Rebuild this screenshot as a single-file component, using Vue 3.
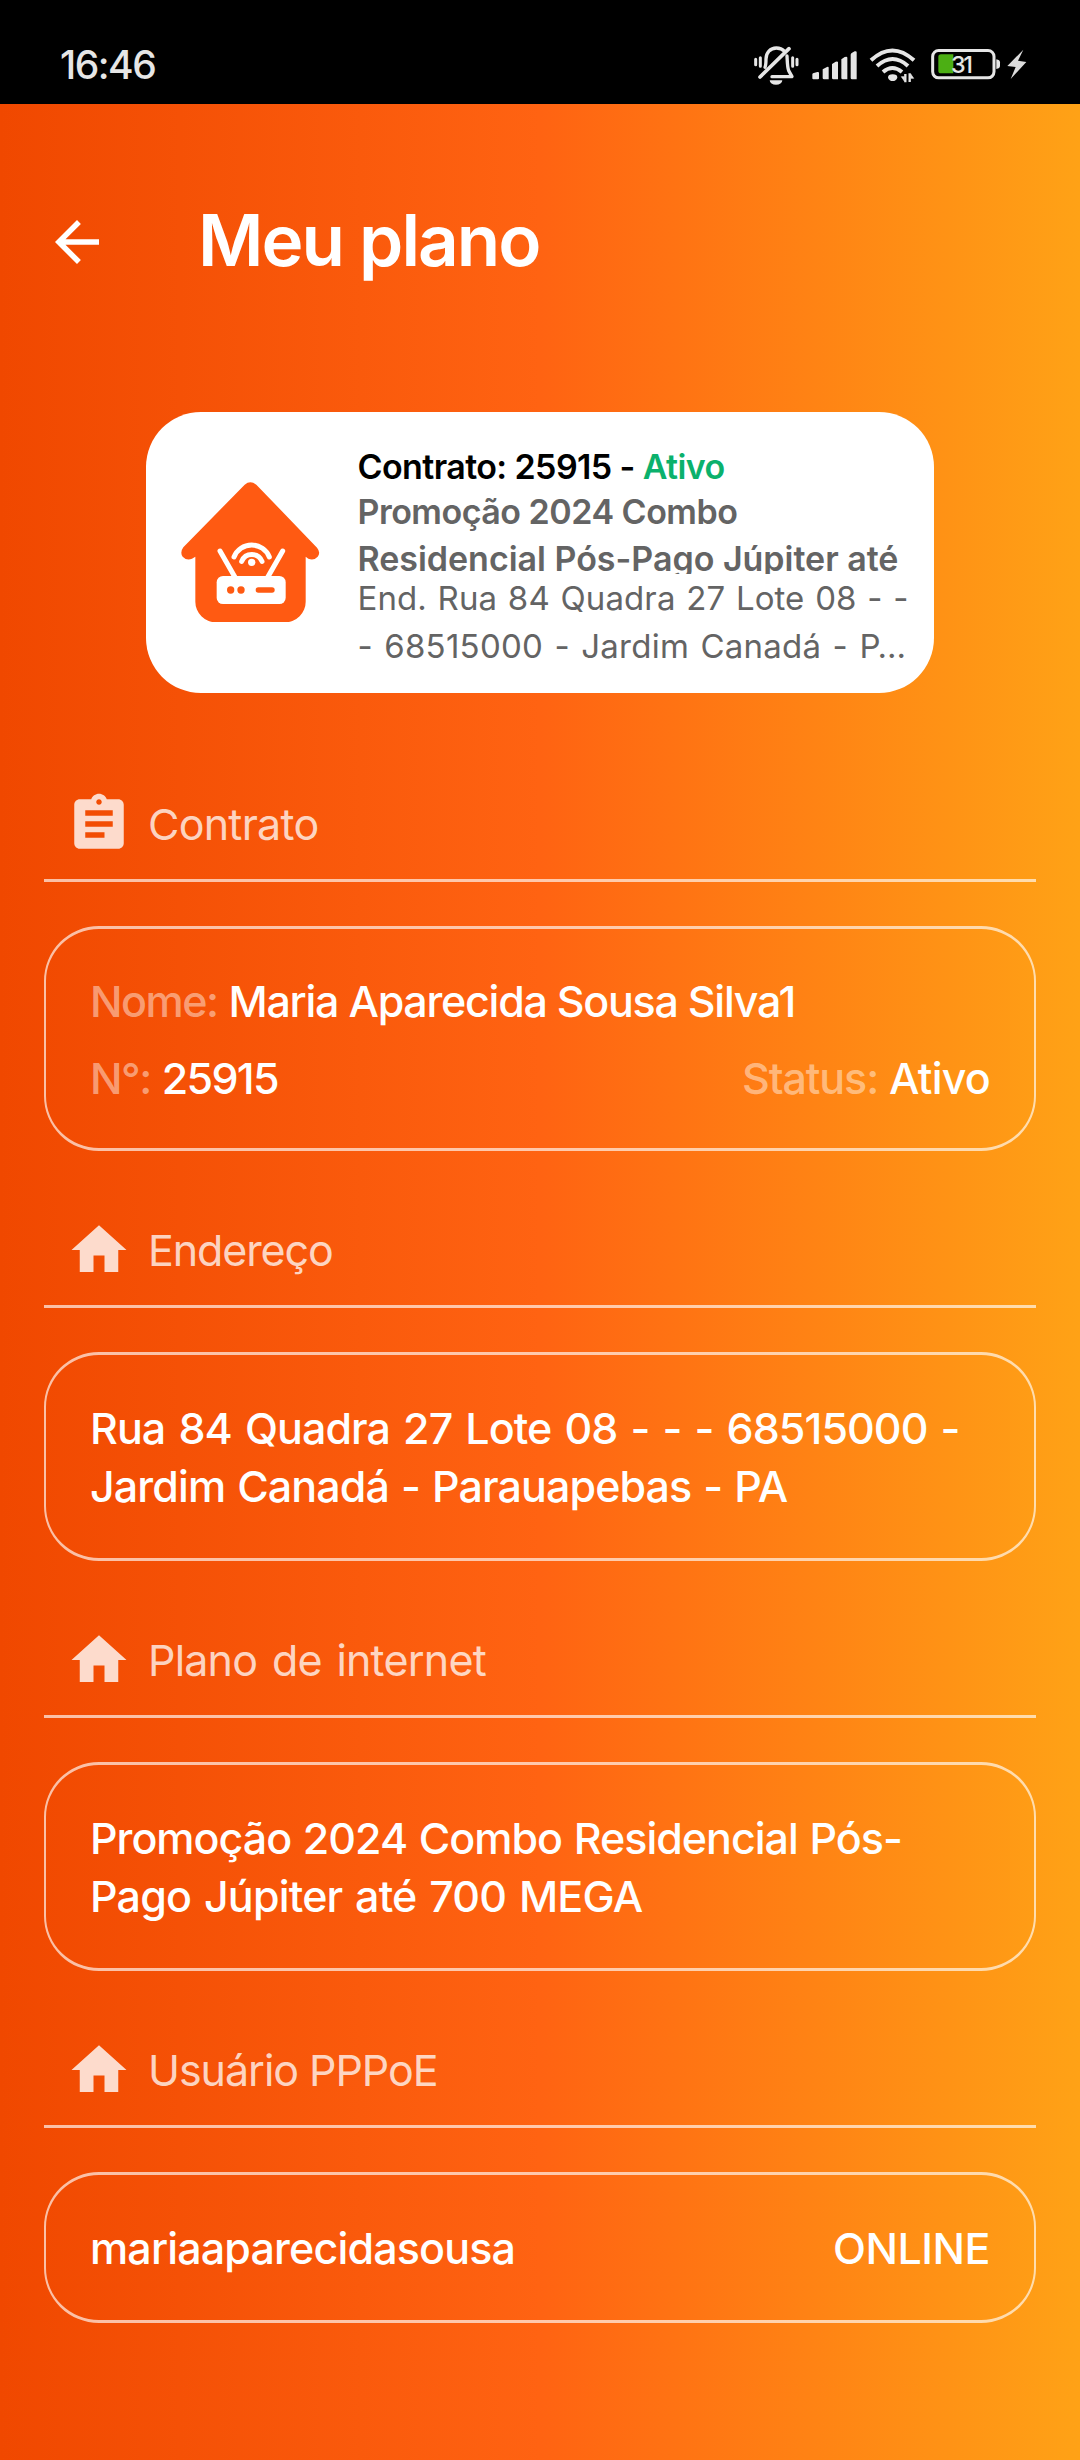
<script setup>
const icons = {
  assignment:
    'M19 3h-4.18C14.4 1.84 13.3 1 12 1c-1.3 0-2.4.84-2.82 2H5c-1.1 0-2 .9-2 2v14c0 1.1.9 2 2 2h14c1.1 0 2-.9 2-2V5c0-1.1-.9-2-2-2zm-7 0c.55 0 1 .45 1 1s-.45 1-1 1-1-.45-1-1 .45-1 1-1zm2 14H7v-2h7v2zm3-4H7v-2h10v2zm0-4H7V7h10v2z',
  home: 'M10 20v-6h4v6h5v-8h3L12 3 2 12h3v8z',
}
</script>

<template>
  <div class="screen">
    <div class="status-bar">
      <span class="clock">16:46</span>
      <div class="status-icons">
        <!-- silent / vibrate bell -->
        <svg class="bell" viewBox="74 74 135 120" width="45" height="40" fill="none" stroke="#e6e6e6" stroke-linecap="round">
          <path d="M107 141c3-7 3-14 3-25 0-19 13-33 31-33 11 0 19 4 25 10" stroke-width="10" />
          <path d="M173 107c1 17 1 34 5 44l10 18H128" stroke-width="10" stroke-linejoin="round" />
          <path d="M92 170L179 85" stroke-width="11" />
          <path d="M79 117v16M93 112v26M190 112v26M203 117v16" stroke-width="9" />
          <path d="M121 180h38a19 13 0 0 1-38 0z" fill="#e6e6e6" stroke="none" />
        </svg>
        <svg class="signal" viewBox="248 74 134 120" width="44.7" height="40" fill="#e6e6e6">
          <path d="M249 162q0-2 2-3l13-4q5-1 5 3v16q0 3-3 3h-14q-3 0-3-3zM280 147l13-7q5-2 5 2v35h-14q-4 0-4-4zM308 131l11-7q7-2 7 2v51h-14q-4 0-4-4zM336 117l10-7q8-3 8 2v65h-14q-4 0-4-4zM364 103q0-3 3-5l9-5q6-2 6 3v81h-14q-4 0-4-4z" />
        </svg>
        <svg class="wifi" viewBox="418 74 141 120" width="47" height="40" fill="none" stroke="#e6e6e6" stroke-width="12">
          <path d="M424 120q64-59 129 0" />
          <path d="M442 137q47-42 93 0" />
          <path d="M460 155q28-24 57 0" />
          <path d="M475 172q0-10 14-10t14 10q-4 10-14 10t-14-10z" fill="#e6e6e6" stroke="none" />
          <path d="M527 186v-25M540 159v26" stroke-width="7" />
          <path d="M515 169l9 13v-13zM552 174l-9-13v13z" fill="#e6e6e6" stroke="#e6e6e6" stroke-width="2" />
        </svg>
        <svg class="battery" viewBox="602 74 210 120" width="70" height="40">
          <rect x="607" y="90.500" width="184" height="82" rx="18" fill="none" stroke="#e6e6e6" stroke-width="9" />
          <path d="M632 102h37v57h-37q-8 0-8-8v-41q0-8 8-8z" fill="#4caf14" />
          <path d="M798 117q11 2 11 9v11q0 7-11 9z" fill="#e6e6e6" />
          <text x="662" y="158" textLength="66" font-size="70" font-weight="500" fill="#e6e6e6">31</text>
        </svg>
        <svg class="bolt" viewBox="830 74 60 120" width="20" height="40" fill="#dcdcdc">
          <path d="M879 88l-48 49 25 3-15 36 47-51-25-4z" />
        </svg>
      </div>
    </div>

    <header class="app-bar">
      <svg class="back" viewBox="0 0 24 24" width="66" height="66" fill="#fff">
        <path d="M20 11H7.830l5.590-5.590L12 4l-8 8 8 8 1.410-1.410L7.830 13H20v-2z" />
      </svg>
      <h1>Meu plano</h1>
    </header>

    <section class="summary">
      <svg class="summary-icon" viewBox="153 244 416 422" width="138.700" height="140.700">
        <path fill="#ff5a12" d="M344 252Q361 238 379 252L561 441Q573 456 563 468Q551 481 535 474L527 468V603A62 62 0 0 1 465 665H258A62 62 0 0 1 196 603V468L186 474Q170 481 158 468Q149 455 160 440Z" />
        <rect x="260" y="526" width="207" height="84" rx="19" fill="#fff" />
        <g fill="none" stroke="#fff" stroke-width="15" stroke-linecap="round">
          <path d="M270 451L315 530M458 451L413 530" />
          <path d="M312 469A57 57 0 0 1 418 469" />
          <path d="M335 482A33 33 0 0 1 396 482" />
        </g>
        <circle cx="365" cy="485" r="11" fill="#fff" />
        <circle cx="302" cy="568" r="11" fill="#ff5a12" />
        <circle cx="333" cy="568" r="11" fill="#ff5a12" />
        <rect x="377" y="560" width="57" height="16" rx="8" fill="#ff5a12" />
      </svg>
      <div class="summary-text">
        <p class="summary-title"><span class="s-contract">Contrato: 25915 - </span><span class="s-status">Ativo</span></p>
        <p class="summary-plan">
          <span class="s-plan1">Promoção 2024 Combo</span>
          <span class="s-plan2">Residencial Pós-Pago Júpiter até</span>
        </p>
        <p class="summary-address">
          <span class="s-addr1">End. Rua 84 Quadra 27 Lote 08 - -</span>
          <span class="s-addr2">- 68515000 - Jardim Canadá - P…</span>
        </p>
      </div>
    </section>

    <main class="sections">
      <section>
        <h2><svg viewBox="0 0 24 24"><path :d="icons.assignment" /></svg><span class="h-contract">Contrato</span></h2>
        <div class="card contract">
          <div class="row">
            <div><span class="key k-name">Nome:</span><span class="v-name">Maria Aparecida Sousa Silva1</span></div>
          </div>
          <div class="row">
            <div><span class="key k-number">N°:</span><span class="v-number">25915</span></div>
            <div><span class="key k-status">Status:</span><span class="v-status">Ativo</span></div>
          </div>
        </div>
      </section>

      <section>
        <h2><svg viewBox="0 0 24 24"><path :d="icons.home" /></svg><span class="h-address">Endereço</span></h2>
        <div class="card">
          <p class="a-line1">Rua 84 Quadra 27 Lote 08 - - - 68515000 -</p>
          <p class="a-line2">Jardim Canadá - Parauapebas - PA</p>
        </div>
      </section>

      <section>
        <h2><svg viewBox="0 0 24 24"><path :d="icons.home" /></svg><span class="h-plan">Plano de internet</span></h2>
        <div class="card">
          <p class="p-line1">Promoção 2024 Combo Residencial Pós-</p>
          <p class="p-line2">Pago Júpiter até 700 MEGA</p>
        </div>
      </section>

      <section>
        <h2><svg viewBox="0 0 24 24"><path :d="icons.home" /></svg><span class="h-user">Usuário PPPoE</span></h2>
        <div class="card">
          <div class="row">
            <span class="v-user">mariaaparecidasousa</span>
            <span class="v-online">ONLINE</span>
          </div>
        </div>
      </section>
    </main>
  </div>
</template>

<style>
body {
  margin: 0;
}
</style>

<style scoped>
.screen {
  width: 1080px;
  height: 2460px;
  overflow: hidden;
  box-sizing: border-box;
  color: #fff;
  font-family: Inter, "Noto Sans", sans-serif;
  background: linear-gradient(90deg, #f04800 0%, #ff6312 50%, #ffa216 100%);
}

h1,
h2,
p {
  margin: 0;
}

svg {
  display: block;
  flex: none;
}

.status-bar {
  display: flex;
  align-items: center;
  justify-content: space-between;
  box-sizing: border-box;
  height: 104px;
  padding: 25px 53px 0 60px;
  background: #000;
}

.clock {
  color: #e6e6e6;
  font-size: 39px;
  font-weight: 500;
  letter-spacing: -1.5px;
}

.status-icons {
  display: flex;
}

.signal {
  margin-left: 13px;
}

.wifi {
  margin-left: 12px;
}

.battery {
  margin-left: 15px;
}

.bolt {
  margin-left: 6px;
}

.app-bar {
  display: flex;
  align-items: center;
  height: 276px;
  padding-left: 44px;
}

.app-bar h1 {
  margin: 0 0 4px 88px;
  font-size: 71px;
  font-weight: 600;
  line-height: 90px;
  letter-spacing: -1.95px;
}

.summary {
  display: flex;
  align-items: flex-start;
  box-sizing: border-box;
  width: 788px;
  height: 281px;
  margin: 32px auto 0;
  padding-left: 35px;
  border-radius: 55px;
  background: #fff;
  color: #646464;
}

.summary-icon {
  margin-top: 69.5px;
}

.summary-text {
  margin: 33px 0 0 37.8px;
  white-space: nowrap;
}

.summary-text span {
  white-space: pre;
}

.summary-title {
  height: 43px;
  color: #000;
  font-size: 34px;
  font-weight: 600;
  line-height: 44px;
}

.s-contract {
  letter-spacing: -0.6px;
}

.s-status {
  color: #0bb16c;
  letter-spacing: -0.6px;
}

.summary-plan {
  height: 86px;
  overflow: hidden;
  font-size: 34px;
  font-weight: 600;
  line-height: 47px;
}

.summary-address {
  font-size: 33px;
  line-height: 48px;
}

.summary-plan span,
.summary-address span {
  display: block;
}

.s-plan1 {
  letter-spacing: -0.5px;
}

.s-plan2 {
  letter-spacing: -0.02px;
}

.s-addr1 {
  letter-spacing: 0.1px;
  word-spacing: 1.3px;
}

.s-addr2 {
  letter-spacing: 0.25px;
  word-spacing: 1.8px;
}

.sections {
  display: flex;
  flex-direction: column;
  gap: 66px;
  padding: 98px 44px 0;
}

.sections h2 {
  display: flex;
  align-items: center;
  gap: 16px;
  height: 66px;
  padding: 0 0 22px 22px;
  border-bottom: 3px solid rgba(255, 255, 255, 0.65);
  font-size: 43px;
  font-weight: 400;
  color: rgba(255, 255, 255, 0.76);
}

.sections h2 svg {
  width: 66px;
  height: 66px;
  fill: rgba(255, 255, 255, 0.8);
}

.h-contract {
  letter-spacing: -0.75px;
}

.h-address {
  letter-spacing: -1.1px;
}

.h-plan {
  letter-spacing: -0.8px;
  word-spacing: 3.4px;
}

.h-user {
  letter-spacing: -1.05px;
}

.card {
  margin-top: 44px;
  padding: 44px 44px 43px;
  border: solid rgba(255, 255, 255, 0.65);
  border-width: 3px 2px;
  border-radius: 55px;
  font-size: 43px;
  font-weight: 500;
  line-height: 58px;
  white-space: nowrap;
}

.card.contract {
  padding: 43px 44px 41px;
}

.row {
  display: flex;
  justify-content: space-between;
}

.row + .row {
  margin-top: 19px;
}

.key {
  margin-right: 11px;
  color: rgba(255, 255, 255, 0.45);
}

.k-name,
.k-number {
  letter-spacing: -1.5px;
}

.k-status {
  letter-spacing: -1.1px;
}

.v-name {
  letter-spacing: -1.27px;
}

.v-number {
  letter-spacing: -1.7px;
}

.v-status {
  letter-spacing: -0.8px;
}

.a-line1 {
  letter-spacing: -0.95px;
  word-spacing: 2.6px;
}

.a-line2 {
  letter-spacing: -0.9px;
  word-spacing: 1.4px;
}

.p-line1 {
  letter-spacing: -1px;
  word-spacing: 1.2px;
}

.p-line2 {
  letter-spacing: -0.8px;
  word-spacing: 2px;
}

.v-user {
  letter-spacing: -0.85px;
}

.v-online {
  letter-spacing: -0.5px;
}
</style>
